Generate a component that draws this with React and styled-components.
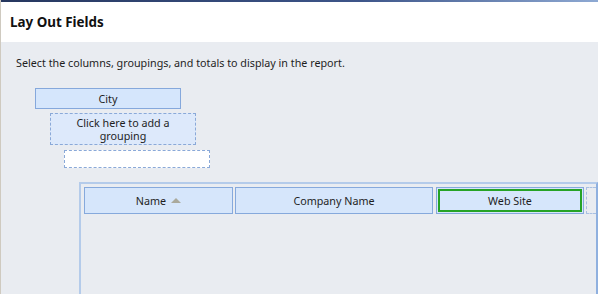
import styled, { createGlobalStyle } from "styled-components";

const Global = createGlobalStyle`
    html, body{
        margin: 0;
        padding: 0;
        background: #e9ecf1;
        overflow: hidden;
    }
    body{
        font-family: "Noto Sans", "Open Sans", sans-serif;
        color: #1e1e1e;
    }
`

const Janela = styled.div`
    width: 598px;
    height: 294px;
    display: flex;
    flex-direction: column;
    border-left: 1px solid #cfcac0;
    box-sizing: border-box;
    background: #e9ecf1;
`

const FaixaTopo = styled.div`
    height: 2px;
    background: linear-gradient(to right, #26375f, #3d5589 60%, #8ea9d3);
`

const Cabecalho = styled.header`
    height: 40px;
    background: #ffffff;
    display: flex;
    align-items: center;
    padding-left: 9px;

    h1{
        margin: 0;
        font-size: 13.4px;
        font-weight: 700;
        color: #111;
    }
`

const Corpo = styled.section`
    flex: 1;
    display: flex;
    flex-direction: column;
    padding: 14px 0 0 15px;
    font-size: 10.75px;

    p{
        margin: 0;
        line-height: 14px;
    }
`

const Agrupamentos = styled.div`
    display: flex;
    flex-direction: column;
    margin-top: 18px;
`

const Caixa = styled.div`
    width: 146px;
    box-sizing: border-box;
    margin-left: ${p => p.$recuo}px;
    margin-top: ${p => p.$topo || 0}px;
    height: ${p => p.$altura}px;
    border: 1px ${p => p.$tracejada ? "dashed" : "solid"} ${p => p.$tracejada ? "#8aa9d8" : "#85a8dc"};
    background: ${p => p.$fundo};
    display: flex;
    align-items: center;
    justify-content: center;
    text-align: center;
    line-height: 13px;
    font-size: 10.75px;
    padding-top: 1px;
`

const Tabela = styled.div`
    flex: 1;
    margin: 14px 0 0 63px;
    border: 2px solid #b4cbea;
    border-right: 2px solid #8fb0df;
    border-bottom: none;
    padding: 3px 0 0 3px;
`

const LinhaCabecalho = styled.div`
    display: flex;
    height: 27px;
`

const Celula = styled.div`
    width: ${p => p.$largura}px;
    margin-right: ${p => p.$espaco}px;
    box-sizing: border-box;
    border: 1px solid #86a9dc;
    background: #d6e6fb;
    display: flex;
    align-items: center;
    justify-content: center;
    gap: 5px;
    font-size: 10.75px;
    padding: 1px;
`

const Selecionada = styled.div`
    flex: 1;
    align-self: stretch;
    border: 2px solid #26a326;
    display: flex;
    align-items: center;
    justify-content: center;
`

const CelulaVazia = styled.div`
    flex: 1;
    border: 1px dashed #a9c0e2;
    border-right: none;
`

const Seta = () => (
    <svg width="10" height="5" viewBox="0 0 10 5">
        <polygon points="0,5 5,0 10,5" fill="#aaa99c" />
    </svg>
)

const App = () => {
    return(
        <>
            <Global />
            <Janela>
                <FaixaTopo />
                <Cabecalho>
                    <h1>Lay Out Fields</h1>
                </Cabecalho>
                <Corpo>
                    <p>Select the columns, groupings, and totals to display in the report.</p>
                    <Agrupamentos>
                        <Caixa $recuo={19} $altura={21} $fundo="#d5e6fc">City</Caixa>
                        <Caixa $recuo={34} $topo={4} $altura={32} $fundo="#dde9fb" $tracejada>
                            Click here to add a<br />grouping
                        </Caixa>
                        <Caixa $recuo={48} $topo={5} $altura={18} $fundo="#ffffff" $tracejada />
                    </Agrupamentos>
                    <Tabela>
                        <LinhaCabecalho>
                            <Celula $largura={149} $espaco={2}>Name <Seta /></Celula>
                            <Celula $largura={198} $espaco={3}>Company Name</Celula>
                            <Celula $largura={148} $espaco={2}>
                                <Selecionada>Web Site</Selecionada>
                            </Celula>
                            <CelulaVazia />
                        </LinhaCabecalho>
                    </Tabela>
                </Corpo>
            </Janela>
        </>
    )
}

export default App;
